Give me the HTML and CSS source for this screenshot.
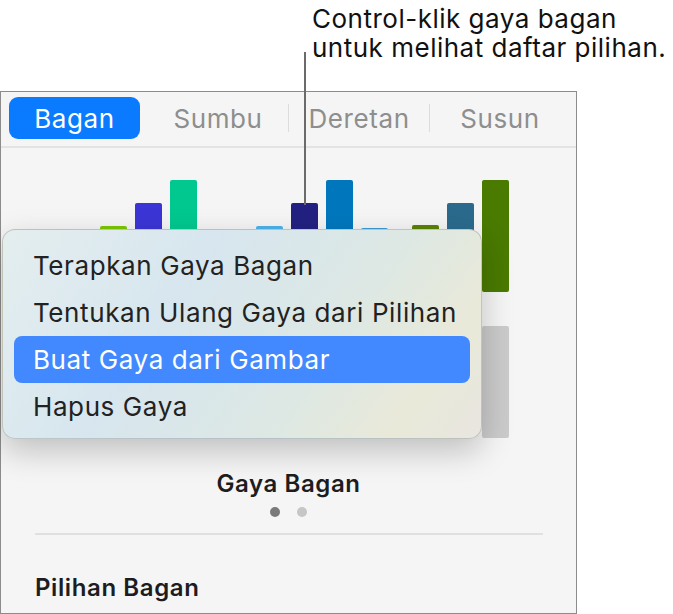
FILE: index.html
```html
<!DOCTYPE html>
<html lang="id">
<head>
    <meta charset="UTF-8">
    <meta name="viewport" content="width=device-width, initial-scale=1.0">
    <title>Gaya Bagan</title>
    <link rel="stylesheet" href="styles.css">
</head>
<body>
    <div class="callout">
        <p>Control-klik gaya bagan<br>untuk melihat daftar pilihan.</p>
        <span class="leader"></span>
    </div>

    <div class="panel">
        <nav class="tabs">
            <div class="tab active">Bagan</div>
            <div class="tab">Sumbu</div>
            <span class="sep"></span>
            <div class="tab">Deretan</div>
            <span class="sep"></span>
            <div class="tab">Susun</div>
        </nav>

        <div class="gallery">
            <div class="grid">
                <div class="thumb">
                    <i class="bar" style="height:66px;background:#7dc600"></i>
                    <i class="bar" style="height:89px;background:#3b35d6"></i>
                    <i class="bar" style="height:112px;background:#00c88e"></i>
                </div>
                <div class="thumb">
                    <i class="bar" style="height:66px;background:#4bb4ea"></i>
                    <i class="bar" style="height:89px;background:#222181"></i>
                    <i class="bar" style="height:112px;background:#0077bd"></i>
                    <i class="bar" style="height:64px;background:#3d9ad6"></i>
                </div>
                <div class="thumb">
                    <i class="bar" style="height:67px;background:#5b8203"></i>
                    <i class="bar" style="height:89px;background:#2b6a8c"></i>
                    <i class="bar" style="height:112px;background:#4a7a00"></i>
                </div>
                <div class="thumb">
                    <i class="bar grey" style="height:60px"></i>
                    <i class="bar grey" style="height:86px"></i>
                    <i class="bar grey" style="height:112px"></i>
                </div>
                <div class="thumb">
                    <i class="bar grey" style="height:60px"></i>
                    <i class="bar grey" style="height:86px"></i>
                    <i class="bar grey" style="height:112px"></i>
                </div>
                <div class="thumb">
                    <i class="bar grey" style="height:60px"></i>
                    <i class="bar grey" style="height:86px"></i>
                    <i class="bar grey" style="height:112px"></i>
                </div>
            </div>
            <svg class="chev" width="14" height="20" viewBox="0 0 14 20">
                <path d="M3 2 L11 10 L3 18" fill="none" stroke="#8a8a8a" stroke-width="2.6" stroke-linecap="round" stroke-linejoin="round"/>
            </svg>
        </div>

        <h3 class="caption">Gaya Bagan</h3>
        <div class="dots"><span class="dot on"></span><span class="dot"></span></div>
        <hr class="rule">
        <h3 class="section-title">Pilihan Bagan</h3>

        <ul class="menu">
            <li>Terapkan Gaya Bagan</li>
            <li>Tentukan Ulang Gaya dari Pilihan</li>
            <li class="selected">Buat Gaya dari Gambar</li>
            <li>Hapus Gaya</li>
        </ul>
    </div>
</body>
</html>
```

FILE: styles.css
```css
body {
    margin: 0;
    font-family: Inter, "Noto Sans", sans-serif;
    background: #fff;
    color: #1d1d1f;
    width: 673px;
    height: 614px;
    overflow: hidden;
}
.callout {
    height: 91px;
    position: relative;
}
.callout p {
    margin: 0;
    padding: 4px 0 0 312px;
    font-size: 26px;
    line-height: 29px;
    letter-spacing: 0.5px;
    color: #111;
}
.leader {
    position: absolute;
    left: 304px;
    top: 52px;
    width: 2px;
    height: 153px;
    background: #6b6b6b;
    z-index: 5;
}
.panel {
    position: relative;
    width: 575px;
    height: 521px;
    border: 1px solid #8c8c8c;
    background: #f5f5f5;
}
.tabs {
    display: flex;
    align-items: center;
    padding: 5px 0 7px 8px;
    border-bottom: 2px solid #e3e3e3;
}
.tab {
    width: 140px;
    height: 42px;
    display: flex;
    align-items: center;
    justify-content: center;
    font-size: 26px;
    letter-spacing: 0.6px;
    color: #8e8e8e;
}
.tab.active {
    width: 131px;
    margin-right: 8px;
    background: #0a7aff;
    color: #fff;
    border-radius: 9px;
}
.sep {
    width: 1px;
    height: 28px;
    background: #dcdcdc;
}
.gallery {
    display: flex;
    align-items: center;
    padding-top: 32px;
}
.grid {
    display: grid;
    grid-template-columns: repeat(3, 132px);
    column-gap: 24px;
    row-gap: 34px;
    padding-left: 99px;
}
.thumb {
    height: 112px;
    display: flex;
    align-items: flex-end;
    gap: 8px;
}
.bar {
    display: block;
    width: 27px;
    border-radius: 2px;
}
.bar.grey {
    background: #cbcbcb;
}
.chev {
    margin-left: 38px;
}
.caption {
    margin: 33px 0 0;
    text-align: center;
    font-size: 24px;
    line-height: 26px;
    font-weight: 600;
    letter-spacing: 0.6px;
    color: #1d1d1f;
}
.dots {
    display: flex;
    justify-content: center;
    gap: 17px;
    margin-top: 10px;
}
.dot {
    width: 10px;
    height: 10px;
    border-radius: 50%;
    background: #c6c6c6;
}
.dot.on {
    background: #7a7a7a;
}
.rule {
    margin: 16px 33px 0 34px;
    border: 0;
    height: 2px;
    background: #e0e0e0;
}
.section-title {
    margin: 40px 0 0 34px;
    font-size: 24px;
    line-height: 26px;
    font-weight: 600;
    letter-spacing: 0.6px;
    color: #1d1d1f;
}
.menu {
    position: absolute;
    left: 1px;
    top: 137px;
    width: 478px;
    height: 196px;
    margin: 0;
    padding: 12px 0 0;
    list-style: none;
    border: 1px solid rgba(0, 0, 0, 0.16);
    border-radius: 13px;
    background: linear-gradient(125deg, #e4eeef 0%, #d7e6ef 35%, #dde8e4 65%, #e9e9d9 85%, #e8e6e0 100%);
    box-shadow: 0 12px 32px rgba(0, 0, 0, 0.22);
}
.menu li {
    height: 47px;
    margin: 0 11px;
    padding-left: 19px;
    display: flex;
    align-items: center;
    font-size: 26px;
    letter-spacing: 0.6px;
    color: #222;
    border-radius: 8px;
}
.menu li.selected {
    background: #4289ff;
    color: #fff;
}
```
